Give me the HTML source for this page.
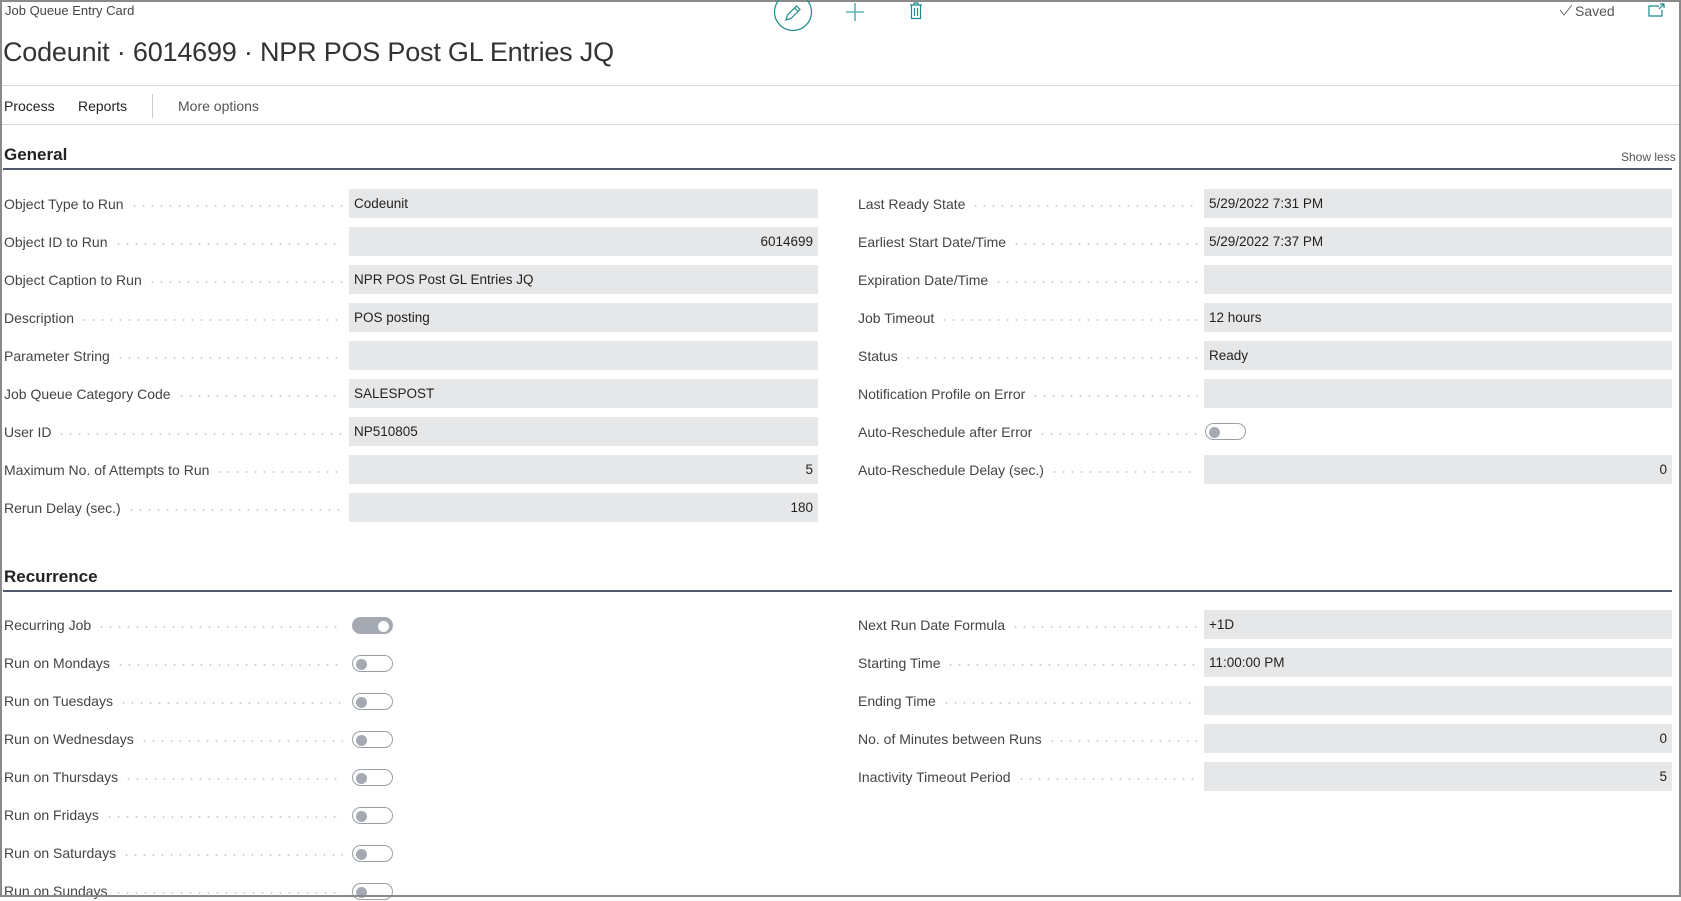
<!DOCTYPE html>
<html><head><meta charset="utf-8"><style>
*{margin:0;padding:0;box-sizing:border-box}
body{width:1681px;height:897px;overflow:hidden;background:#fff;font-family:"Liberation Sans",sans-serif;color:#333;position:relative}
.frame{position:absolute;left:0;top:0;width:1681px;height:897px;border:2px solid #8a8a8a;border-right-width:2px}
.a{position:absolute;white-space:nowrap}
.lbl{position:absolute;font-size:14px;color:#444;height:20px;line-height:20px;display:flex;align-items:center}
.lbl span{padding-right:6px}
.lbl i{flex:1;height:2px;margin-top:3px;background-image:radial-gradient(circle,#cfcfcf 0.9px,transparent 1.1px);background-size:9px 2px}
.inp{position:absolute;background:#e6e7e9;height:29px;line-height:29px;font-size:13.5px;color:#222;padding:0 5px}
.r{text-align:right}
.tg{position:absolute;width:41px;height:17px;border:1.3px solid #9aa0a8;border-radius:9px}
.tg b{position:absolute;left:3px;top:2.5px;width:11px;height:11px;border-radius:50%;background:#a5a9b1}
.tg.on{background:#a5a9b1;border-color:#a5a9b1}
.tg.on b{left:auto;right:3px;background:#fff}
.hl{position:absolute;height:1px;background:#d6d6d6}
.sec{position:absolute;font-size:17px;color:#222;font-weight:600}
.ul{position:absolute;left:3px;width:1669px;height:2px;background:#505a6b}
</style></head><body>
<div class="frame"></div>
<div class="a" style="left:5px;top:3px;font-size:13px;color:#444">Job Queue Entry Card</div>
<div class="a" style="left:3px;top:37px;font-size:27px;color:#333;letter-spacing:-0.2px">Codeunit · 6014699 · NPR POS Post GL Entries JQ</div>
<svg class="a" style="left:773px;top:-8px" width="40" height="40" viewBox="0 0 40 40"><circle cx="20" cy="20" r="18.5" fill="none" stroke="#1a8a8f" stroke-width="1.2"/><path d="M13 28l1.5-5 9-9 3.5 3.5-9 9z M21.5 16l3.5 3.5" fill="none" stroke="#1a8a8f" stroke-width="1.2"/></svg>
<svg class="a" style="left:845px;top:2px" width="20" height="20"><path d="M10 1v18M1 10h18" stroke="#5fb6b9" stroke-width="1.6"/></svg>
<svg class="a" style="left:909px;top:2px" width="14" height="18"><path d="M1 3h12M5 3V1h4v2M2.5 3v13.5h9V3M5.5 6v8M8.5 6v8" fill="none" stroke="#1a8a8f" stroke-width="1.2"/></svg>
<svg class="a" style="left:1559px;top:4px" width="14" height="12"><path d="M1 6l4 5 8-10" fill="none" stroke="#666" stroke-width="1"/></svg>
<div class="a" style="left:1575px;top:3px;font-size:14px;color:#555">Saved</div>
<svg class="a" style="left:1648px;top:3px" width="18" height="14"><path d="M11 3H1v10h13V7M12 1h4v4M16 1l-5 5" fill="none" stroke="#1a8a8f" stroke-width="1.2"/></svg>
<div class="hl" style="left:2px;top:85px;width:1677px"></div>
<div class="a" style="left:4px;top:98px;font-size:14px;color:#222">Process</div>
<div class="a" style="left:78px;top:98px;font-size:14px;color:#222">Reports</div>
<div class="a" style="left:152px;top:94px;width:1px;height:24px;background:#ccc"></div>
<div class="a" style="left:178px;top:98px;font-size:14px;color:#555">More options</div>
<div class="hl" style="left:2px;top:124px;width:1677px"></div>
<div class="sec" style="left:4px;top:145px">General</div>
<div class="a" style="left:1621px;top:150px;font-size:12px;color:#555">Show less</div>
<div class="ul" style="top:168px"></div>
<div class="sec" style="left:4px;top:567px">Recurrence</div>
<div class="ul" style="top:590px;height:1.5px"></div>

<div class="lbl" style="left:4px;top:194px;width:339px"><span>Object Type to Run</span><i></i></div><div class="inp" style="left:349px;top:189px;width:469px">Codeunit</div>
<div class="lbl" style="left:4px;top:232px;width:339px"><span>Object ID to Run</span><i></i></div><div class="inp r" style="left:349px;top:227px;width:469px">6014699</div>
<div class="lbl" style="left:4px;top:270px;width:339px"><span>Object Caption to Run</span><i></i></div><div class="inp" style="left:349px;top:265px;width:469px">NPR POS Post GL Entries JQ</div>
<div class="lbl" style="left:4px;top:308px;width:339px"><span>Description</span><i></i></div><div class="inp" style="left:349px;top:303px;width:469px">POS posting</div>
<div class="lbl" style="left:4px;top:346px;width:339px"><span>Parameter String</span><i></i></div><div class="inp" style="left:349px;top:341px;width:469px"></div>
<div class="lbl" style="left:4px;top:384px;width:339px"><span>Job Queue Category Code</span><i></i></div><div class="inp" style="left:349px;top:379px;width:469px">SALESPOST</div>
<div class="lbl" style="left:4px;top:422px;width:339px"><span>User ID</span><i></i></div><div class="inp" style="left:349px;top:417px;width:469px">NP510805</div>
<div class="lbl" style="left:4px;top:460px;width:339px"><span>Maximum No. of Attempts to Run</span><i></i></div><div class="inp r" style="left:349px;top:455px;width:469px">5</div>
<div class="lbl" style="left:4px;top:498px;width:339px"><span>Rerun Delay (sec.)</span><i></i></div><div class="inp r" style="left:349px;top:493px;width:469px">180</div>

<div class="lbl" style="left:858px;top:194px;width:340px"><span>Last Ready State</span><i></i></div><div class="inp" style="left:1204px;top:189px;width:468px">5/29/2022 7:31 PM</div>
<div class="lbl" style="left:858px;top:232px;width:340px"><span>Earliest Start Date/Time</span><i></i></div><div class="inp" style="left:1204px;top:227px;width:468px">5/29/2022 7:37 PM</div>
<div class="lbl" style="left:858px;top:270px;width:340px"><span>Expiration Date/Time</span><i></i></div><div class="inp" style="left:1204px;top:265px;width:468px"></div>
<div class="lbl" style="left:858px;top:308px;width:340px"><span>Job Timeout</span><i></i></div><div class="inp" style="left:1204px;top:303px;width:468px">12 hours</div>
<div class="lbl" style="left:858px;top:346px;width:340px"><span>Status</span><i></i></div><div class="inp" style="left:1204px;top:341px;width:468px">Ready</div>
<div class="lbl" style="left:858px;top:384px;width:340px"><span>Notification Profile on Error</span><i></i></div><div class="inp" style="left:1204px;top:379px;width:468px"></div>
<div class="lbl" style="left:858px;top:422px;width:340px"><span>Auto-Reschedule after Error</span><i></i></div><div class="tg" style="left:1205px;top:423px"><b></b></div>
<div class="lbl" style="left:858px;top:460px;width:340px"><span>Auto-Reschedule Delay (sec.)</span><i></i></div><div class="inp r" style="left:1204px;top:455px;width:468px">0</div>

<div class="lbl" style="left:4px;top:615px;width:339px"><span>Recurring Job</span><i></i></div><div class="tg on" style="left:352px;top:617px"><b></b></div>
<div class="lbl" style="left:4px;top:653px;width:339px"><span>Run on Mondays</span><i></i></div><div class="tg" style="left:352px;top:655px"><b></b></div>
<div class="lbl" style="left:4px;top:691px;width:339px"><span>Run on Tuesdays</span><i></i></div><div class="tg" style="left:352px;top:693px"><b></b></div>
<div class="lbl" style="left:4px;top:729px;width:339px"><span>Run on Wednesdays</span><i></i></div><div class="tg" style="left:352px;top:731px"><b></b></div>
<div class="lbl" style="left:4px;top:767px;width:339px"><span>Run on Thursdays</span><i></i></div><div class="tg" style="left:352px;top:769px"><b></b></div>
<div class="lbl" style="left:4px;top:805px;width:339px"><span>Run on Fridays</span><i></i></div><div class="tg" style="left:352px;top:807px"><b></b></div>
<div class="lbl" style="left:4px;top:843px;width:339px"><span>Run on Saturdays</span><i></i></div><div class="tg" style="left:352px;top:845px"><b></b></div>
<div class="lbl" style="left:4px;top:881px;width:339px"><span>Run on Sundays</span><i></i></div><div class="tg" style="left:352px;top:883px"><b></b></div>

<div class="lbl" style="left:858px;top:615px;width:340px"><span>Next Run Date Formula</span><i></i></div><div class="inp" style="left:1204px;top:610px;width:468px">+1D</div>
<div class="lbl" style="left:858px;top:653px;width:340px"><span>Starting Time</span><i></i></div><div class="inp" style="left:1204px;top:648px;width:468px">11:00:00 PM</div>
<div class="lbl" style="left:858px;top:691px;width:340px"><span>Ending Time</span><i></i></div><div class="inp" style="left:1204px;top:686px;width:468px"></div>
<div class="lbl" style="left:858px;top:729px;width:340px"><span>No. of Minutes between Runs</span><i></i></div><div class="inp r" style="left:1204px;top:724px;width:468px">0</div>
<div class="lbl" style="left:858px;top:767px;width:340px"><span>Inactivity Timeout Period</span><i></i></div><div class="inp r" style="left:1204px;top:762px;width:468px">5</div>
<div class="a" style="left:0;top:895px;width:1681px;height:2px;background:#8a8a8a"></div>
</body></html>
